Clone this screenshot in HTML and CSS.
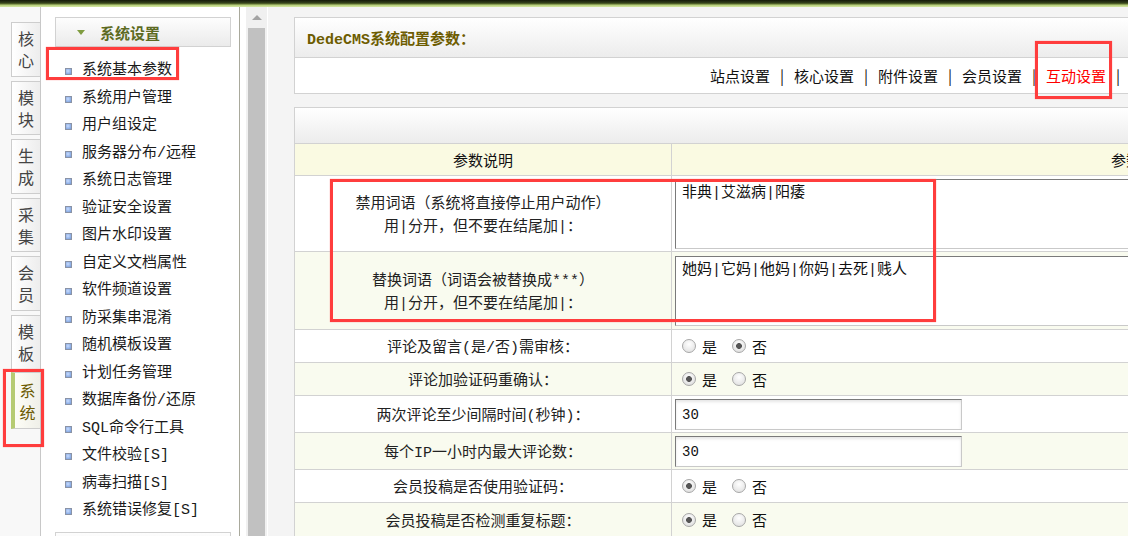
FILE: index.html
```html
<!DOCTYPE html>
<html lang="zh-CN">
<head>
<meta charset="utf-8">
<title>DedeCMS系统配置参数</title>
<link rel="stylesheet" href="styles.css">
</head>
<body>
<div class="topbar"></div>
<div class="layout">
  <div class="tabs">
    <div class="tab">核<br>心</div>
    <div class="tab">模<br>块</div>
    <div class="tab">生<br>成</div>
    <div class="tab">采<br>集</div>
    <div class="tab">会<br>员</div>
    <div class="tab">模<br>板</div>
    <div class="tab active">系<br>统</div>
  </div>
  <div class="menu">
    <div class="menu-head"><span class="tri"></span>系统设置</div>
    <ul class="menu-list">
      <li>系统基本参数</li>
      <li>系统用户管理</li>
      <li>用户组设定</li>
      <li>服务器分布/远程</li>
      <li>系统日志管理</li>
      <li>验证安全设置</li>
      <li>图片水印设置</li>
      <li>自定义文档属性</li>
      <li>软件频道设置</li>
      <li>防采集串混淆</li>
      <li>随机模板设置</li>
      <li>计划任务管理</li>
      <li>数据库备份/还原</li>
      <li>SQL命令行工具</li>
      <li>文件校验[S]</li>
      <li>病毒扫描[S]</li>
      <li>系统错误修复[S]</li>
    </ul>
    <div class="menu-head menu-head2"></div>
  </div>
  <div class="scroll">
    <div class="track">
      <div class="arrow"></div>
      <div class="thumb"></div>
    </div>
  </div>
  <div class="main">
    <div class="panel">
      <div class="panel-head">DedeCMS系统配置参数：</div>
      <div class="nav">
        <span class="nav-item">站点设置</span><span class="sep">|</span>
        <span class="nav-item">核心设置</span><span class="sep">|</span>
        <span class="nav-item">附件设置</span><span class="sep">|</span>
        <span class="nav-item">会员设置</span><span class="sep">|</span>
        <span class="nav-item current">互动设置</span><span class="sep">|</span>
      </div>
    </div>
    <div class="panel panel2">
      <div class="panel-head2"></div>
      <div class="row row-th">
        <div class="c1">参数说明</div>
        <div class="c2 th2">参数值</div>
      </div>
      <div class="row row-tall">
        <div class="c1 two">禁用词语（系统将直接停止用户动作）<br>用|分开，但不要在结尾加|：</div>
        <div class="c2 field"><textarea class="ta">非典|艾滋病|阳痿</textarea></div>
      </div>
      <div class="row row-tall2 alt">
        <div class="c1 two">替换词语（词语会被替换成***）<br>用|分开，但不要在结尾加|：</div>
        <div class="c2 field"><textarea class="ta ta2">她妈|它妈|他妈|你妈|去死|贱人</textarea></div>
      </div>
      <div class="row row-r">
        <div class="c1">评论及留言(是/否)需审核：</div>
        <div class="c2 radios"><label><input type="radio" name="r1">是</label><label><input type="radio" name="r1" checked>否</label></div>
      </div>
      <div class="row row-r alt">
        <div class="c1">评论加验证码重确认：</div>
        <div class="c2 radios"><label><input type="radio" name="r2" checked>是</label><label><input type="radio" name="r2">否</label></div>
      </div>
      <div class="row row-i">
        <div class="c1">两次评论至少间隔时间(秒钟)：</div>
        <div class="c2 field"><input class="txt" type="text" value="30"></div>
      </div>
      <div class="row row-i alt">
        <div class="c1">每个IP一小时内最大评论数：</div>
        <div class="c2 field"><input class="txt" type="text" value="30"></div>
      </div>
      <div class="row row-r">
        <div class="c1">会员投稿是否使用验证码：</div>
        <div class="c2 radios"><label><input type="radio" name="r3" checked>是</label><label><input type="radio" name="r3">否</label></div>
      </div>
      <div class="row row-r alt">
        <div class="c1">会员投稿是否检测重复标题：</div>
        <div class="c2 radios"><label><input type="radio" name="r4" checked>是</label><label><input type="radio" name="r4">否</label></div>
      </div>
    </div>
  </div>
</div>
<div class="mark mark1"></div>
<div class="mark mark2"></div>
<div class="mark mark3"></div>
<div class="mark mark4"></div>
</body>
</html>
```

FILE: styles.css
```css
html, body {
  margin: 0;
  padding: 0;
}
body {
  width: 1128px;
  height: 536px;
  overflow: hidden;
  position: relative;
  background: #f4f4f4;
  font-family: "Liberation Mono", "Noto Sans CJK SC", monospace;
  font-size: 15px;
  color: #222;
}
.topbar {
  height: 7px;
  background: linear-gradient(#141a0a 0%, #2e3a18 35%, #56682c 55%, #b4cc78 72%, #d6e8a6 100%);
}
.layout {
  display: flex;
  height: 529px;
}
/* left tabs */
.tabs {
  width: 40px;
  flex-shrink: 0;
  border-right: 1px solid #c8c8c8;
  background: #f8f8f8;
  padding-top: 15px;
  display: flex;
  flex-direction: column;
  align-items: flex-end;
  gap: 4px;
}
.tab {
  width: 29px;
  height: 54.6px;
  box-sizing: border-box;
  border: 1px solid #cdcdcd;
  border-right: none;
  background: linear-gradient(to right, #ffffff, #ededed);
  color: #444;
  font-family: "Noto Sans CJK SC", sans-serif;
  font-size: 16px;
  line-height: 22px;
  text-align: center;
  padding-top: 4px;
}
.tab.active {
  height: 57px;
  margin-top: -2px;
  border-left: 4px solid #b6cb72;
  background: linear-gradient(to right, #fdfdf6, #efefe8);
  color: #6b5a00;
  padding-top: 6px;
}
/* menu */
.menu {
  width: 198px;
  flex-shrink: 0;
  border-right: 1px solid #a9a99c;
  background: #fff;
  padding-top: 10px;
}
.menu-head {
  margin-left: 14px;
  width: 176px;
  height: 30px;
  box-sizing: border-box;
  border: 1px solid #d2d2d2;
  background: linear-gradient(#fdfdfd, #ebebeb);
  display: flex;
  align-items: center;
  padding-left: 21px;
  font-family: "Noto Sans CJK SC", sans-serif;
  font-weight: bold;
  color: #5c6a22;
  font-size: 15px;
}
.tri {
  width: 0;
  height: 0;
  border-left: 4.5px solid transparent;
  border-right: 4.5px solid transparent;
  border-top: 5px solid #7f9c40;
  margin-right: 15px;
}
.menu-list {
  list-style: none;
  margin: 10px 0 0 0;
  padding: 0 0 0 24px;
}
.menu-list li {
  height: 27.5px;
  line-height: 27.5px;
  display: flex;
  align-items: center;
  color: #1a1a1a;
  white-space: nowrap;
}
.menu-list li::before {
  content: "";
  width: 5px;
  height: 5px;
  border: 1px solid #8a93a6;
  background: radial-gradient(circle at 40% 40%, #c8dcff, #6f97d8);
  margin-right: 10px;
  flex-shrink: 0;
  position: relative;
  top: 1px;
}
.menu-head2 {
  margin-top: 7px;
}
/* scrollbar */
.scroll {
  width: 28px;
  flex-shrink: 0;
  background: #fff;
  padding-left: 6px;
  box-sizing: border-box;
}
.track {
  width: 21px;
  height: 100%;
  background: #f0f0f0;
  display: flex;
  flex-direction: column;
  align-items: center;
}
.arrow {
  margin-top: 8px;
  width: 0;
  height: 0;
  border-left: 5px solid transparent;
  border-right: 5px solid transparent;
  border-bottom: 5px solid #a3a3a3;
}
.thumb {
  margin-top: 8px;
  width: 17px;
  flex: 1;
  background: #c1c1c1;
}
/* main */
.main {
  flex: 1;
  overflow: hidden;
  padding: 10px 0 0 26px;
}
.panel {
  width: 1300px;
  border: 1px solid #d2d2d2;
  background: #fff;
}
.panel-head {
  height: 40px;
  box-sizing: border-box;
  background: linear-gradient(#ffffff, #ececec);
  border-bottom: 1px solid #d2d2d2;
  padding-left: 12px;
  display: flex;
  align-items: center;
  font-family: "Liberation Mono", "Noto Sans CJK SC", monospace;
  font-weight: bold;
  font-size: 15px;
  color: #6d5c00;
}
.nav {
  height: 35px;
  padding-left: 415px;
  display: flex;
  align-items: center;
  white-space: nowrap;
  color: #111;
  font-family: "Noto Sans CJK SC", sans-serif;
}
.nav-item {
  width: 60px;
}
.nav-item.current {
  color: #f00;
}
.sep {
  width: 24px;
  text-align: center;
}
.panel2 {
  margin-top: 13px;
}
.panel-head2 {
  height: 36px;
  box-sizing: border-box;
  background: linear-gradient(#ffffff, #ececec);
  border-bottom: 1px solid #d2d2d2;
}
.row {
  display: grid;
  grid-template-columns: 377px 1fr;
  box-sizing: border-box;
  border-bottom: 1px solid #d2d2d2;
  background: #fff;
}
.row.alt {
  background: #f9fbef;
}
.c1 {
  border-right: 1px solid #d2d2d2;
  display: flex;
  align-items: center;
  justify-content: center;
  text-align: center;
  color: #222;
}
.c1.two {
  line-height: 23px;
  padding-top: 4px;
  box-sizing: border-box;
}
.c2 {
  display: flex;
  align-items: center;
}
.row-th {
  height: 32px;
  background: #fafae2;
}
.row-th .c1, .th2 {
  color: #111;
}
.th2 {
  justify-content: center;
}
.row-tall { height: 76px; }
.row-tall2 { height: 78px; }
.row-r { height: 33px; }
.row-i { height: 37px; }
.row-r:last-child { border-bottom: none; }
.field {
  padding-left: 3px;
  align-items: flex-start;
}
.ta {
  margin-top: 3px;
  width: 800px;
  height: 70px;
  box-sizing: border-box;
  border: 1px solid;
  border-color: #7a7a7a #c9c9c9 #c9c9c9 #7a7a7a;
  padding: 5px 6px 3px;
  font-family: "Liberation Mono", "Noto Sans CJK SC", monospace;
  font-size: 15px;
  line-height: 18px;
  color: #111;
  resize: none;
  background: #fff;
  outline: none;
}
.ta2 {
  margin-top: 4px;
}
.txt {
  margin-top: 3px;
  width: 287px;
  height: 31px;
  box-sizing: border-box;
  border: 1px solid;
  border-color: #7a7a7a #c9c9c9 #c9c9c9 #7a7a7a;
  box-shadow: inset 0 2px 3px #e6e6e6;
  padding: 0 6px;
  font-family: "Liberation Mono", "Noto Sans CJK SC", monospace;
  font-size: 14px;
  color: #111;
  background: #fff;
  outline: none;
}
.radios {
  padding-left: 10px;
  font-family: "Noto Sans CJK SC", sans-serif;
}
.radios label {
  display: flex;
  align-items: center;
  color: #111;
  margin-right: 15px;
}
.radios input {
  appearance: none;
  -webkit-appearance: none;
  margin: 0 6px 0 0;
  width: 14px;
  height: 14px;
  border-radius: 50%;
  border: 1px solid #a7a7a7;
  background: radial-gradient(circle at 50% 35%, #ffffff, #dcdcdc);
  box-sizing: border-box;
}
.radios input:checked {
  background: radial-gradient(circle, #555 0 2.6px, transparent 3.2px), radial-gradient(circle at 50% 35%, #ffffff, #d8d8d8);
}
/* annotation marks */
.mark {
  position: absolute;
  border: 3px solid #ff3d3d;
  box-shadow: 0 0 1px #ff8080;
  box-sizing: border-box;
  pointer-events: none;
}
.mark1 { left: 46px; top: 47px; width: 133px; height: 33px; }
.mark2 { left: 330px; top: 179px; width: 606px; height: 143px; }
.mark3 { left: 1035px; top: 41px; width: 77px; height: 58px; }
.mark4 { left: 3px; top: 369px; width: 41px; height: 78px; }
```
